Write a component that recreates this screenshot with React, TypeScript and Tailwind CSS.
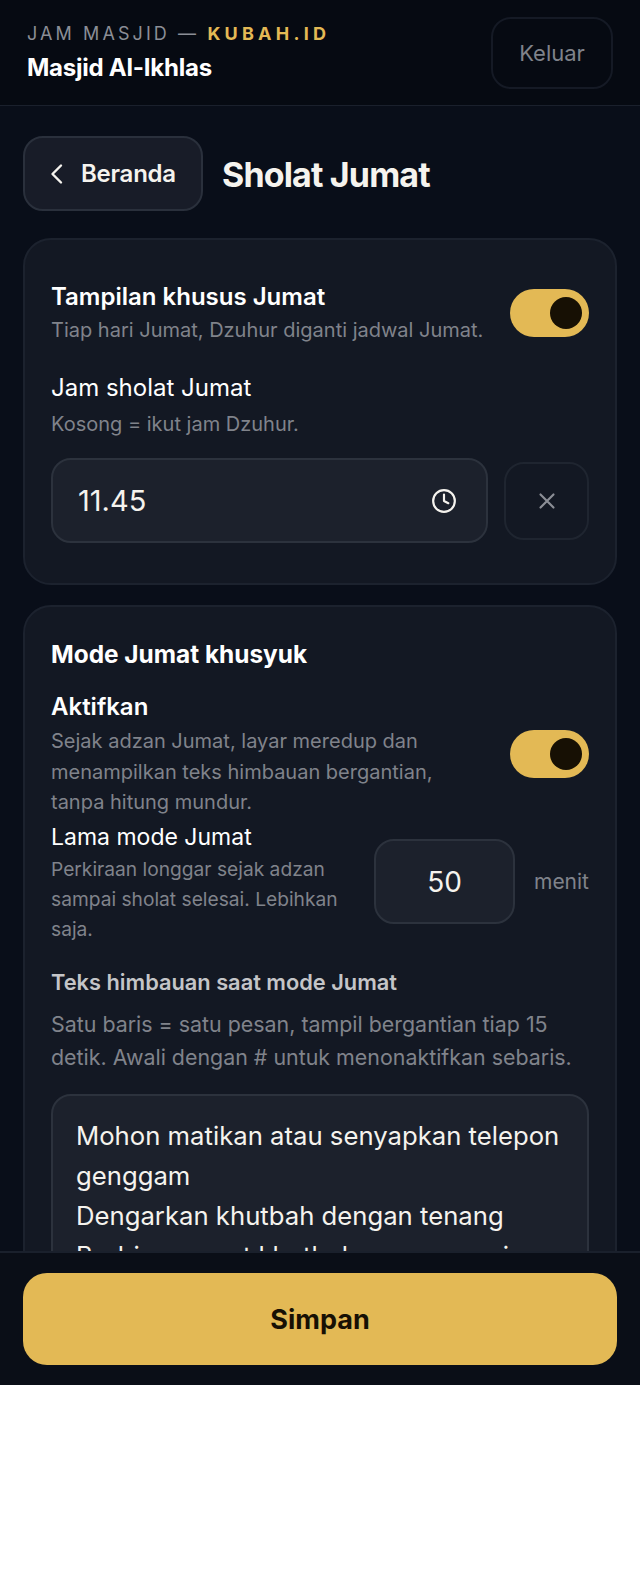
import React from "react";

function Toggle() {
  return (
    <div className="mt-[2px] flex h-[48px] w-[79px] shrink-0 items-center justify-end rounded-full bg-[#e3b955] pr-[7px]">
      <div className="h-[32px] w-[32px] rounded-full bg-[#171004]" />
    </div>
  );
}

export default function App() {
  return (
    <div className="flex h-[1385px] w-[640px] flex-col overflow-hidden bg-[#090e19] font-['Inter',sans-serif] text-[#f5f3ee] antialiased">
      <header className="flex h-[106px] shrink-0 items-center justify-between border-b border-[#1a202c] bg-[#060a12] px-[27px]">
        <div>
          <div className="text-[18px] leading-[26px] tracking-[0.172em] text-[#8b8e96]">
            JAM MASJID — <span className="font-bold tracking-[0.235em] text-[#e3b955]">KUBAH.ID</span>
          </div>
          <div className="mt-[5px] text-[24px] font-bold leading-[32px] tracking-[-0.01em] text-white">Masjid Al-Ikhlas</div>
        </div>
        <button className="flex h-[72px] w-[122px] items-center justify-center rounded-[20px] border-2 border-[#151a25] pt-[2px] text-[22px] text-[#7f828a]">Keluar</button>
      </header>
      <main className="flex-1 overflow-hidden px-[23px] pt-[30px]">
        <div className="flex items-center gap-[19px]">
          <button className="flex h-[75px] w-[180px] items-center gap-[12px] rounded-[20px] border-2 border-[#2a303c] bg-[#181c28] pl-[22px] pt-[1px] text-[24px] font-semibold tracking-[-0.01em]">
            <svg width="22" height="26" viewBox="0 0 22 26" fill="none" stroke="currentColor" strokeWidth="2.4" strokeLinecap="round" strokeLinejoin="round"><path d="M14 4.5 L5.5 13 L14 21.5" /></svg>
            Beranda
          </button>
          <h1 className="pt-[2px] text-[34px] font-bold tracking-[-0.025em] text-[#f5f3ee]">Sholat Jumat</h1>
        </div>
        <section className="mt-[27px] h-[347px] rounded-[28px] border-2 border-[#1c222e] bg-[#131823] px-[26px] pt-[39px]">
          <div className="flex items-center justify-between">
            <div>
              <div className="text-[24px] font-semibold leading-[36px] text-white">Tampilan khusus Jumat</div>
              <div className="text-[20px] leading-[30px] text-[#80838b]">Tiap hari Jumat, Dzuhur diganti jadwal Jumat.</div>
            </div>
            <Toggle />
          </div>
          <div className="mt-[25px] text-[24px] leading-[36px] text-white">Jam sholat Jumat</div>
          <div className="mt-[1px] text-[20px] leading-[34px] text-[#80838b]">Kosong = ikut jam Dzuhur.</div>
          <div className="mt-[17px] flex items-center gap-[16px]">
            <div className="flex h-[85px] flex-1 items-center justify-between rounded-[20px] border-2 border-[#2c323d] bg-[#1c212c] pl-[25px] pr-[29px] text-[29px]">
              <span>11.45</span>
              <svg width="26" height="26" viewBox="0 0 24 24" fill="none" stroke="currentColor" strokeWidth="2" strokeLinecap="round" strokeLinejoin="round"><circle cx="12" cy="12" r="10" /><path d="M12 6v6l4 2" /></svg>
            </div>
            <button className="flex h-[78px] w-[85px] shrink-0 items-center justify-center rounded-[20px] border-2 border-[#1f2530] text-[#8b8e96]">
              <svg width="26" height="26" viewBox="0 0 24 24" fill="none" stroke="currentColor" strokeWidth="2" strokeLinecap="round"><path d="M6 6l12 12M18 6L6 18" /></svg>
            </button>
          </div>
        </section>
        <section className="mt-[20px] rounded-[28px] border-2 border-[#1c222e] bg-[#131823] px-[26px] pt-[29px]">
          <div className="text-[24.4px] font-bold leading-[36px] text-white">Mode Jumat khusyuk</div>
          <div className="mt-[17px] flex items-center justify-between">
            <div className="w-[400px]">
              <div className="text-[24px] font-semibold leading-[36px] text-white">Aktifkan</div>
              <div className="mt-[1px] text-[20px] leading-[30.5px] text-[#80838b]">Sejak adzan Jumat, layar meredup dan menampilkan teks himbauan bergantian, tanpa hitung mundur.</div>
            </div>
            <Toggle />
          </div>
          <div className="mt-[1.5px] flex items-center">
            <div className="w-[323px] pr-[10px]">
              <div className="pt-[1px] text-[23px] leading-[34px] text-white">Lama mode Jumat</div>
              <div className="text-[19.2px] leading-[30px] text-[#80838b]">Perkiraan longgar sejak adzan sampai sholat selesai. Lebihkan saja.</div>
            </div>
            <div className="flex h-[85px] w-[141px] items-center justify-center rounded-[20px] border-2 border-[#2c323d] bg-[#1c212c] text-[28px]">50</div>
            <div className="ml-auto text-[21px] text-[#80838b]">menit</div>
          </div>
          <div className="mt-[21px] text-[21.8px] font-semibold leading-[34px] text-[#c4c5c8]">Teks himbauan saat mode Jumat</div>
          <div className="mt-[9px] text-[21.4px] leading-[33px] text-[#80838b]">Satu baris = satu pesan, tampil bergantian tiap 15 detik. Awali dengan # untuk menonaktifkan sebaris.</div>
          <div className="mt-[20px] h-[400px] rounded-[20px] border-2 border-[#2c323d] bg-[#1c212c] px-[23px] pt-[20px] text-[25.7px] leading-[40px]">
            Mohon matikan atau senyapkan telepon genggam<br />Dengarkan khutbah dengan tenang<br />Berbicara saat khutbah mengurangi pahala
          </div>
        </section>
      </main>
      <footer className="shrink-0 border-t-2 border-[#1a202c] bg-[#0a0e17] px-[23px] pb-[20px] pt-[20px]">
        <button className="flex h-[92px] w-full items-center justify-center rounded-[24px] bg-[#e3b955] pt-[2px] text-[27px] font-bold text-[#171004]">Simpan</button>
      </footer>
    </div>
  );
}
